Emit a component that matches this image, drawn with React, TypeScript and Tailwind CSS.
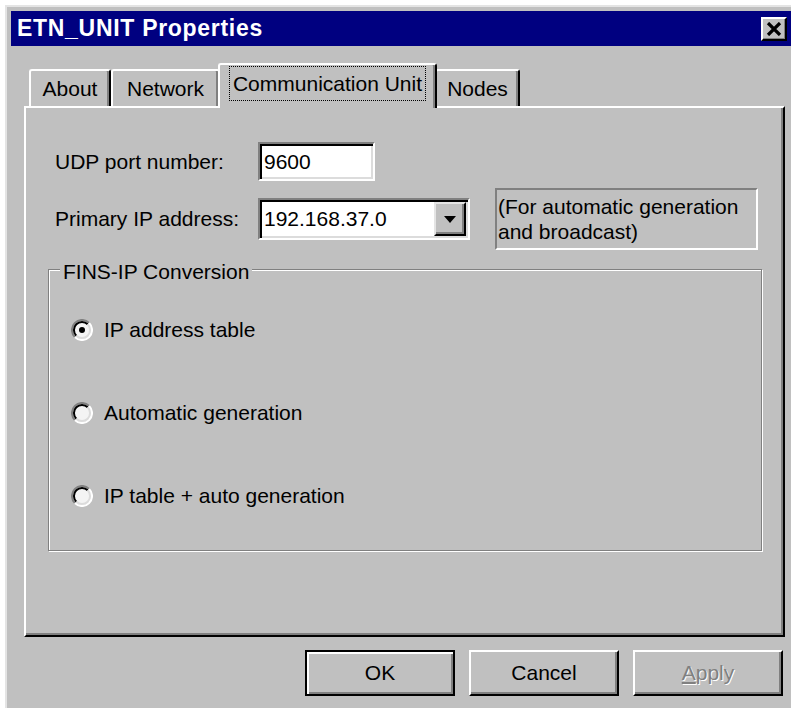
import React from "react";

const font = { fontFamily: '"Liberation Sans", Arial, sans-serif' };

function Radio({ checked, label }: { checked?: boolean; label: string }) {
  return (
    <div className="flex items-center h-[24px]">
      <svg width="22" height="22" viewBox="0 0 22 22" className="ml-[22px]">
        <circle cx="11" cy="11" r="10" fill="#f4f4f4" />
        <path d="M3.9 18.1 A10 10 0 0 1 18.1 3.9" fill="none" stroke="#808080" strokeWidth="2" />
        <path d="M5.3 16.7 A8 8 0 0 1 16.7 5.3" fill="none" stroke="#000" strokeWidth="2" />
        <path d="M18.1 3.9 A10 10 0 0 1 3.9 18.1" fill="none" stroke="#fff" strokeWidth="2" />
        <path d="M16.7 5.3 A8 8 0 0 1 5.3 16.7" fill="none" stroke="#dcdcdc" strokeWidth="2" />
        {checked && <circle cx="11" cy="11" r="3" fill="#000" />}
      </svg>
      <span className="ml-[11px] text-[21px] text-black">{label}</span>
    </div>
  );
}

function Tab({ label, width, selected }: { label: string; width: string; selected?: boolean }) {
  if (selected) {
    return (
      <div
        className={`relative z-10 -ml-[2px] -mb-[2px] h-[45px] ${width} bg-[#c0c0c0] border-t-2 border-l-2 border-white border-r-2 border-r-black rounded-t-[3px] shadow-[inset_-2px_0_0_#808080] flex items-start justify-center pt-[2px]`}
      >
        <span className="outline-1 outline-dotted outline-black px-[3px] h-[33px] flex items-center text-[21px]">
          {label}
        </span>
      </div>
    );
  }
  return (
    <div
      className={`h-[37px] ${width} bg-[#c0c0c0] border-t-2 border-l-2 border-white border-r-2 border-r-black rounded-t-[3px] shadow-[inset_-2px_0_0_#808080] flex items-center justify-center text-[21px]`}
    >
      {label}
    </div>
  );
}

function Button({ children, isDefault, disabled }: { children: React.ReactNode; isDefault?: boolean; disabled?: boolean }) {
  return (
    <div
      className={`w-[150px] h-[46px] flex items-center justify-center text-[21px] bg-[#c0c0c0] ${
        isDefault
          ? "border-2 border-black shadow-[inset_2px_2px_0_#fff,inset_-2px_-2px_0_#808080]"
          : "border-t-2 border-l-2 border-white border-r-2 border-b-2 border-r-black border-b-black shadow-[inset_-2px_-2px_0_#808080]"
      } ${disabled ? "text-[#808080] [text-shadow:1px_1px_0_#fff]" : "text-black"}`}
    >
      {children}
    </div>
  );
}

export default function App() {
  return (
    <div className="w-[791px] h-[708px] bg-white overflow-hidden pt-[5px] pl-[5px]" style={font}>
      <div className="h-[703px] bg-[#c0c0c0] border-t-2 border-l-2 border-[#e4e4e4] pt-[4px] pl-[4px]">
        {/* title bar */}
        <div className="h-[35px] bg-[#000080] flex items-center justify-between pl-[6px] pr-[4px]">
          <span className="text-white font-bold text-[23px] tracking-[0.7px]">ETN_UNIT Properties</span>
          <div className="w-[26px] h-[24px] bg-[#c0c0c0] border-t-2 border-l-2 border-white border-r-2 border-b-2 border-r-black border-b-black shadow-[inset_-1px_-1px_0_#808080] flex items-center justify-center">
            <svg width="16" height="14" viewBox="0 0 16 14">
              <path d="M2 1 L14 13 M14 1 L2 13" stroke="#000" strokeWidth="3.2" />
            </svg>
          </div>
        </div>

        <div className="pl-[13px] pt-[17px]">
          {/* tabs */}
          <div className="flex items-end h-[43px] pl-[5px]">
            <Tab label="About" width="w-[82px]" />
            <Tab label="Network" width="w-[109px]" />
            <Tab label="Communication Unit" width="w-[219px]" selected />
            <div className="-ml-[2px]">
              <Tab label="Nodes" width="w-[85px]" />
            </div>
          </div>

          {/* tab page */}
          <div className="w-[761px] h-[531px] border-t-2 border-l-2 border-white border-r-2 border-b-2 border-r-black border-b-black shadow-[inset_-2px_-2px_0_#808080] text-black">
            <div className="pl-[29px] pt-[34px]">
              <div className="flex items-center h-[39px]">
                <span className="w-[203px] text-[21px]">UDP port number:</span>
                <div className="w-[117px] h-[39px] bg-white border-t-2 border-l-2 border-[#808080] border-r-2 border-b-2 border-r-white border-b-white shadow-[inset_2px_2px_0_#000,inset_-2px_-2px_0_#dcdcdc] flex items-center pl-[4px] text-[21px]">
                  9600
                </div>
              </div>

              <div className="flex items-center mt-[7px] h-[62px]">
                <span className="w-[203px] text-[21px]">Primary IP address:</span>
                <div className="w-[212px] h-[42px] bg-white border-t-2 border-l-2 border-[#808080] border-r-2 border-b-2 border-r-white border-b-white shadow-[inset_2px_2px_0_#000,inset_-2px_-2px_0_#dcdcdc] flex items-center justify-between pl-[4px] pr-[2px] text-[21px]">
                  <span>192.168.37.0</span>
                  <div className="w-[32px] h-[34px] bg-[#c0c0c0] border-t-2 border-l-2 border-[#e4e4e4] border-r-2 border-b-2 border-r-black border-b-black shadow-[inset_-2px_-2px_0_#808080] flex items-center justify-center">
                    <svg width="12" height="7" viewBox="0 0 12 7">
                      <path d="M0 0 H12 L6 7 Z" fill="#000" />
                    </svg>
                  </div>
                </div>
                <div className="ml-[25px] w-[263px] h-[62px] border-t-2 border-l-2 border-[#808080] border-r-2 border-b-2 border-r-white border-b-white pl-[1px] pt-[4px] text-[21px] leading-[25px]">
                  (For automatic generation
                  <br />
                  and broadcast)
                </div>
              </div>
            </div>

            {/* FINS-IP group */}
            <div className="relative ml-[22px] mt-[19px] w-[714px] h-[282px] border border-[#808080] shadow-[inset_1px_1px_0_#fff,1px_1px_0_#fff]">
              <span className="absolute -top-[14px] left-[11px] px-[3px] bg-[#c0c0c0] text-[21px]">FINS-IP Conversion</span>
              <div className="flex flex-col gap-[59px] pt-[48px]">
                <Radio checked label="IP address table" />
                <Radio label="Automatic generation" />
                <Radio label="IP table + auto generation" />
              </div>
            </div>
          </div>

          {/* dialog buttons */}
          <div className="flex justify-end gap-[14px] w-[761px] pr-[2px] mt-[13px]">
            <Button isDefault>OK</Button>
            <Button>Cancel</Button>
            <Button disabled>
              <span>
                <span className="underline">A</span>pply
              </span>
            </Button>
          </div>
        </div>
      </div>
    </div>
  );
}
